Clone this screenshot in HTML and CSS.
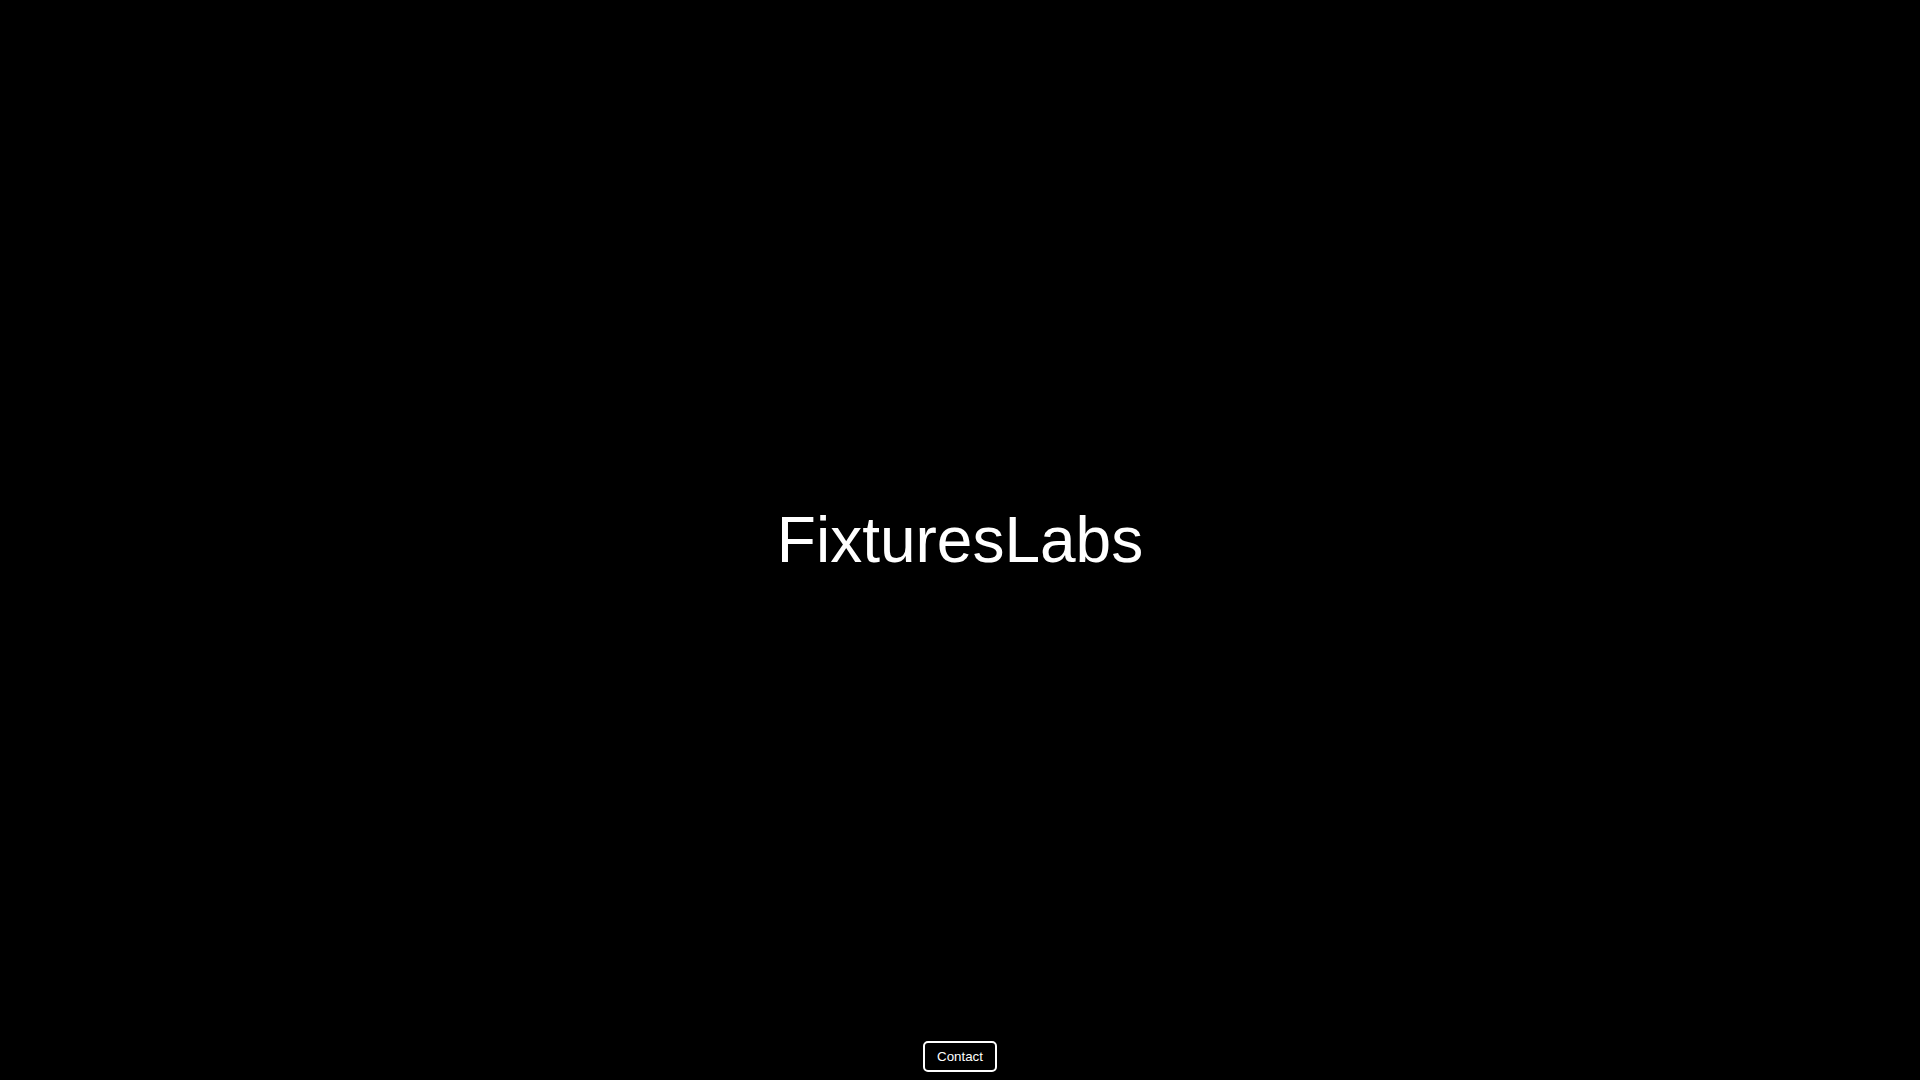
FILE: index.html
```html
<!DOCTYPE html>
<html lang="en">
<head>
<meta charset="utf-8">
<title>FixturesLabs</title>
<link rel="stylesheet" href="styles.css">
</head>
<body>
<div class="page">
  <div class="spacer"></div>
  <h1 class="title">FixturesLabs</h1>
  <footer class="footer">
    <button class="contact" type="button">Contact</button>
  </footer>
</div>
</body>
</html>
```

FILE: styles.css
```css
html, body {
  margin: 0;
  padding: 0;
  background: #000;
  color: #fff;
  font-family: "Liberation Sans", Arial, sans-serif;
}

.page {
  height: 100vh;
  display: grid;
  grid-template-rows: 1fr auto 1fr;
  justify-items: center;
}

.title {
  margin: 0;
  font-size: 64px;
  font-weight: 400;
  line-height: normal;
  text-align: center;
}

.footer {
  align-self: end;
  padding-bottom: 8px;
}

.contact {
  display: block;
  font-family: "Liberation Sans", Arial, sans-serif;
  font-size: 13.333px;
  line-height: normal;
  color: #fff;
  background: #000;
  border: 2px solid #fff;
  border-radius: 5px;
  padding: 6px 12px;
  cursor: pointer;
}
```
